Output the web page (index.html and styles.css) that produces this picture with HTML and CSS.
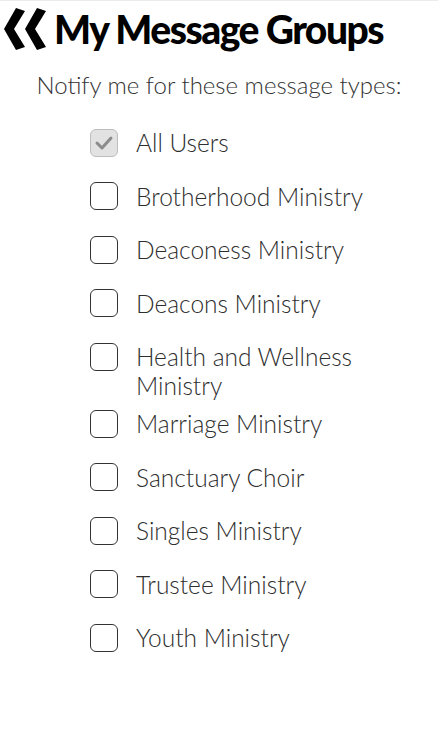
FILE: index.html
```html
<!DOCTYPE html>
<html>
<head>
<meta charset="utf-8">
<link rel="stylesheet" href="styles.css">
</head>
<body>
<div class="page">
  <header class="header">
    <svg class="back" width="46" height="44" viewBox="0 0 46 44">
      <polygon points="3,22 15,1 24,4 13,22 24,40 15,43"/>
      <polygon points="24,22 36,1 45,4 34,22 45,40 36,43"/>
    </svg>
    <h1 class="title">My Message Groups</h1>
  </header>
  <p class="subtitle">Notify me for these message types:</p>
  <ul class="groups">
    <li class="group"><span class="box checked"><svg width="20" height="20" viewBox="0 0 20 20"><polyline points="3,10 8,15 17,5"/></svg></span><span class="label">All Users</span></li>
    <li class="group"><span class="box"></span><span class="label">Brotherhood Ministry</span></li>
    <li class="group"><span class="box"></span><span class="label">Deaconess Ministry</span></li>
    <li class="group"><span class="box"></span><span class="label">Deacons Ministry</span></li>
    <li class="group"><span class="box"></span><span class="label">Health and Wellness Ministry</span></li>
    <li class="group"><span class="box"></span><span class="label">Marriage Ministry</span></li>
    <li class="group"><span class="box"></span><span class="label">Sanctuary Choir</span></li>
    <li class="group"><span class="box"></span><span class="label">Singles Ministry</span></li>
    <li class="group"><span class="box"></span><span class="label">Trustee Ministry</span></li>
    <li class="group"><span class="box"></span><span class="label">Youth Ministry</span></li>
  </ul>
</div>
</body>
</html>
```
FILE: styles.css
```css
html, body {
  margin: 0;
  padding: 0;
  background: #fff;
}
.page {
  width: 438px;
  height: 750px;
  box-sizing: border-box;
  border-top: 1px solid #ececec;
  font-family: Lato, "Open Sans", sans-serif;
  color: #333;
}
.header {
  display: flex;
  align-items: center;
  gap: 7px;
  padding: 5px 0 0 1px;
  height: 50px;
  box-sizing: border-box;
}
.back {
  flex: none;
  fill: #000;
}
.title {
  margin: 0;
  font-size: 39px;
  font-weight: 900;
  letter-spacing: -1.5px;
  color: #000;
  line-height: 44px;
}
.subtitle {
  margin: 19px 0 0;
  text-align: center;
  font-size: 24px;
  font-weight: 300;
  line-height: 30px;
  color: #333;
}
.groups {
  list-style: none;
  margin: 28px 0 0;
  padding: 0 0 0 90px;
}
.group {
  display: flex;
  align-items: flex-start;
  gap: 18px;
  min-height: 53.5px;
  padding-bottom: 9px;
  box-sizing: border-box;
}
.box {
  flex: none;
  width: 28px;
  height: 28px;
  margin-top: 0.5px;
  box-sizing: border-box;
  border: 1.5px solid #333;
  border-radius: 6px;
  display: flex;
  align-items: center;
  justify-content: center;
}
.box.checked {
  background: #e2e2e2;
  border-color: #bdbdbd;
}
.box svg polyline {
  fill: none;
  stroke: #8c8c8c;
  stroke-width: 3;
  stroke-linecap: round;
  stroke-linejoin: round;
}
.label {
  font-size: 24.5px;
  font-weight: 300;
  line-height: 29px;
  color: #2e2e2e;
  width: 232px;
}
```
